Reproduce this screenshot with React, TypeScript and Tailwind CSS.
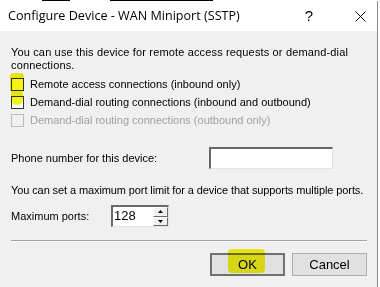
import React from 'react';

const Checkbox: React.FC<{ disabled?: boolean }> = ({ disabled }) => (
    <span
        className={`w-[13px] h-[13px] shrink-0 border ${disabled ? 'border-[#bcbcbc] bg-[#f0f0f0]' : 'border-[#333] bg-white'}`}
    />
);

const Highlight: React.FC<{ className: string }> = ({ className }) => (
    <span className={`absolute bg-[#f2f200]/90 mix-blend-multiply ${className}`} />
);

const App: React.FC = () => {
    const sans = { fontFamily: '"Liberation Sans", Arial, sans-serif' };

    return (
        <div className="w-[380px] h-[287px] bg-white overflow-hidden relative" style={sans}>
            {/* stray bits of the window behind */}
            <div className="flex h-px">
                <span className="ml-[42px] w-[28px] bg-black" />
                <span className="ml-[40px] w-[103px] bg-black" />
            </div>
            <div className="w-[378px] h-[286px] border-r border-[#8a8a8a] flex flex-col">
                {/* title bar */}
                <div className="h-[30px] bg-white flex items-center text-black">
                    <span className="ml-[8px] mt-[1px]" style={{ fontFamily: '"Open Sans", "Noto Sans", sans-serif', fontSize: '12.6px' }}>
                        Configure Device - WAN Miniport (SSTP)
                    </span>
                    <span className="ml-auto w-[20px] text-center text-[15px] mr-[36px]">?</span>
                    <span className="w-[11px] mr-[11px] flex justify-center">
                        <svg width="11" height="11" viewBox="0 0 11 11">
                            <path d="M0.5 0.5 L10.5 10.5 M10.5 0.5 L0.5 10.5" stroke="#000" strokeWidth="1" />
                        </svg>
                    </span>
                </div>

                {/* body */}
                <div className="flex-1 bg-[#f0f0f0] px-[11px] pt-[15px] text-[11px] leading-[13px] text-black relative">
                    <p className="w-[340px] tracking-[0.15px]">
                        You can use this device for remote access requests or demand-dial connections.
                    </p>

                    <div className="mt-[6px] flex flex-col gap-[5px]">
                        <label className="flex items-center gap-[6px] h-[13px]">
                            <Checkbox />
                            <span>Remote access connections (inbound only)</span>
                        </label>
                        <label className="flex items-center gap-[6px] h-[13px]">
                            <Checkbox />
                            <span>Demand-dial routing connections (inbound and outbound)</span>
                        </label>
                        <label className="flex items-center gap-[6px] h-[13px] text-[#a0a0a0]">
                            <Checkbox disabled />
                            <span>Demand-dial routing connections (outbound only)</span>
                        </label>
                    </div>

                    <div className="mt-[20px] flex items-center">
                        <span className="w-[198px]">Phone number for this device:</span>
                        <span className="w-[124px] h-[22px] bg-white border-t-2 border-l-2 border-t-[#696969] border-l-[#696969] border-b border-r border-b-[#e3e3e3] border-r-[#e3e3e3]" />
                    </div>

                    <p className="mt-[15px] whitespace-nowrap tracking-[-0.1px]">You can set a maximum port limit for a device that supports multiple ports.</p>

                    <div className="mt-[8px] flex items-center">
                        <span className="w-[100px]">Maximum ports:</span>
                        <div className="w-[58px] h-[22px] bg-white border-t-2 border-l-2 border-t-[#696969] border-l-[#696969] border-b border-r border-b-[#e3e3e3] border-r-[#e3e3e3] flex">
                            <span className="flex-1 pl-[1px] text-[13px] leading-[17px]">128</span>
                            <div className="w-[15px] flex flex-col">
                                {[0, 1].map(i => (
                                    <span key={i} className="flex-1 flex items-center justify-center bg-[#f0f0f0] border-r border-b border-r-[#696969] border-b-[#696969] border-t border-l border-t-white border-l-white">
                                        <svg width="5" height="3" viewBox="0 0 5 3">
                                            <path d={i === 0 ? 'M2.5 0 L5 3 L0 3 Z' : 'M0 0 L5 0 L2.5 3 Z'} fill="#000" />
                                        </svg>
                                    </span>
                                ))}
                            </div>
                        </div>
                    </div>

                    <div className="mt-[13px] h-[2px] w-[356px] border-t border-t-[#a0a0a0] border-b border-b-white" />

                    <div className="mt-[11px] flex justify-end gap-[7px] w-[356px] text-[13px]">
                        <button className="w-[75px] h-[23px] bg-[#e1e1e1] border-2 border-[#707070] leading-[19px]">OK</button>
                        <button className="w-[75px] h-[23px] bg-[#e1e1e1] border border-[#adadad]">Cancel</button>
                    </div>
                </div>
            </div>

            {/* yellow marker */}
            <Highlight className="left-[10px] top-[73px] w-[14px] h-[20px] rounded-sm" />
            <Highlight className="left-[11px] top-[93px] w-[12px] h-[12px] rounded-b-md" />
            <Highlight className="left-[228px] top-[249px] w-[37px] h-[24px] rounded-sm" />
        </div>
    );
};

export default App;
